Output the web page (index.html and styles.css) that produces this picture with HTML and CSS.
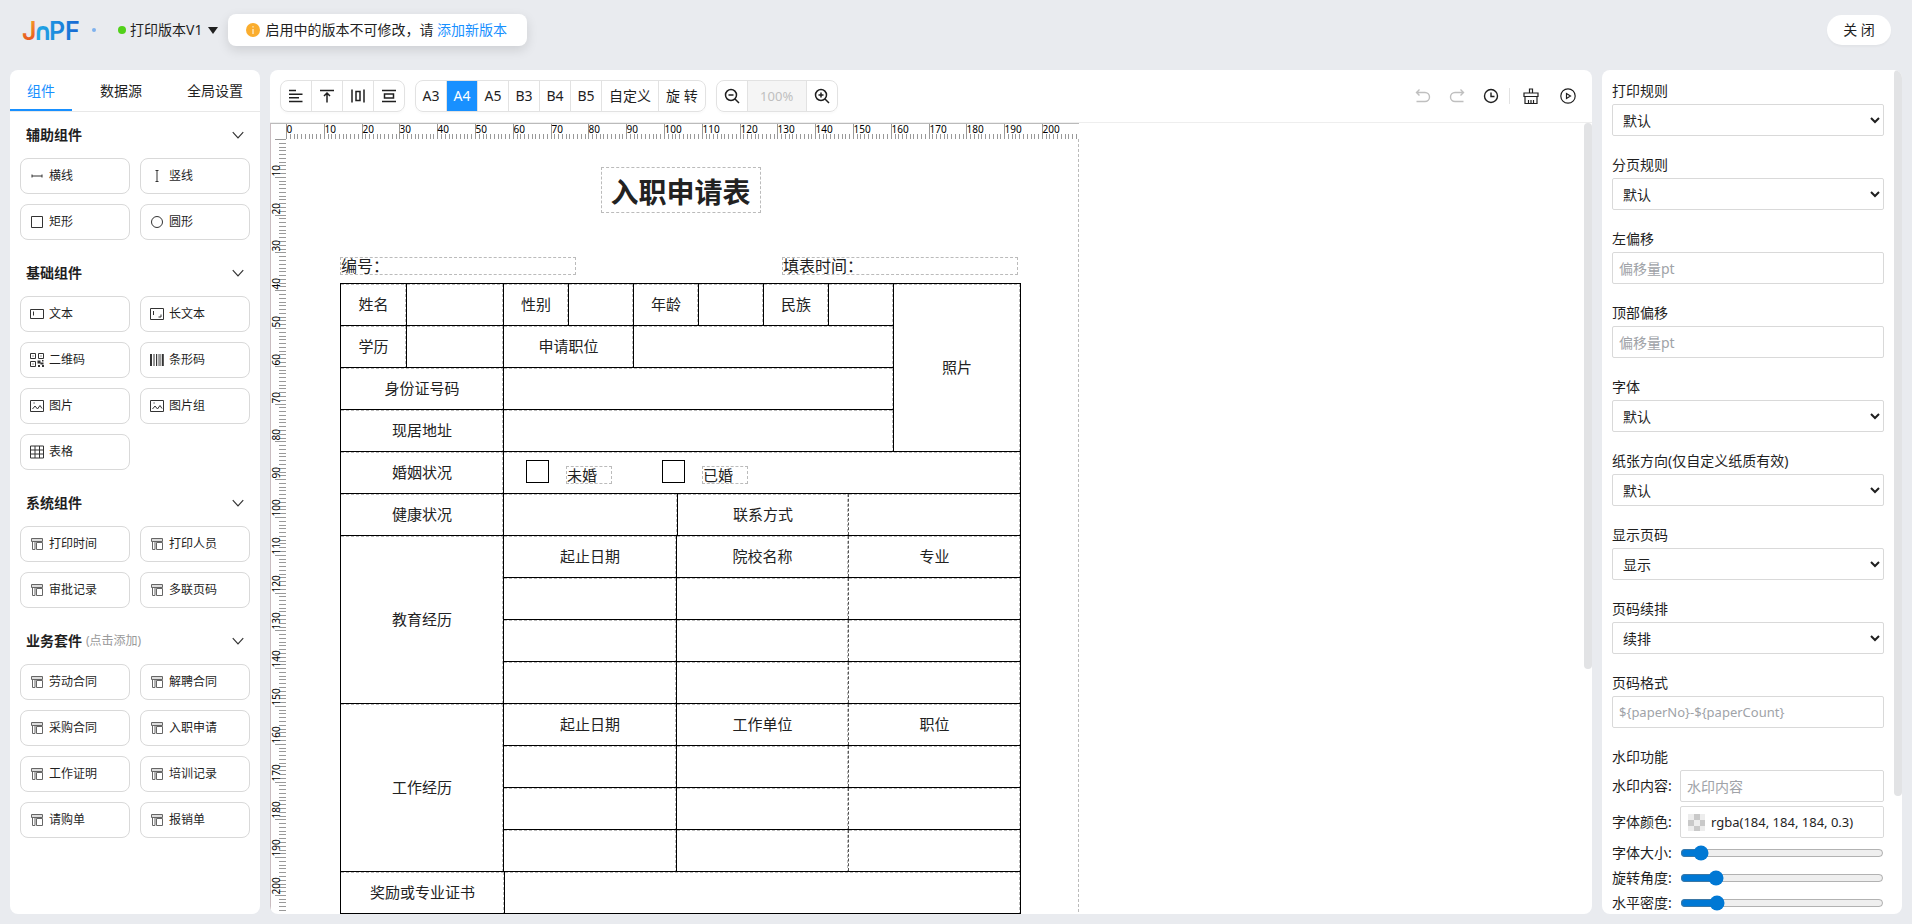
FILE: index.html
```
<!DOCTYPE html>
<html lang="zh-CN">
  <head>
    <meta charset="UTF-8" />
    <meta name="viewport" content="width=device-width, initial-scale=1.0" />
    <title>打印模板设计</title>
    <link rel="stylesheet" href="styles.css">
  </head>
  <body>
    <svg class="sprite" aria-hidden="true">
      <symbol id="i-hline" viewBox="0 0 14 14"><path d="M2 7h10M2 5.500v3M12 5.500v3" /></symbol>
      <symbol id="i-vline" viewBox="0 0 14 14"><path d="M7 1.500v11M5.500 1.500h3M5.500 12.500h3" /></symbol>
      <symbol id="i-rect" viewBox="0 0 14 14"><path d="M1.500 1.500h11v11h-11z" /></symbol>
      <symbol id="i-circle" viewBox="0 0 14 14"><circle cx="7" cy="7" r="5.500" /></symbol>
      <symbol id="i-text" viewBox="0 0 14 14"><path d="M.5 2.500h13v9H.5zM3.500 4.500v4" /></symbol>
      <symbol id="i-longtext" viewBox="0 0 14 14"><path d="M.5 1.500h13v11H.5zM3.500 4v4M8.500 10h2.500V7.500" /></symbol>
      <symbol id="i-qr" viewBox="0 0 14 14"><path d="M.5 .5h5v5h-5zM8.500 .5h5v5h-5zM.5 8.500h5v5h-5zM2.500 3h1M10.500 3h1M2.500 11h1" /><path d="M7.500 7.500h3v3h-3zM10.500 9.500h3v2h-3zM8 12h2v2H8zM12 12h2v2h-2zM12 7h1.500v1.500H12z" fill="currentColor" stroke="none" /></symbol>
      <symbol id="i-bar" viewBox="0 0 14 14"><path d="M1 1v12M12.800 1v12" stroke-width="2" /><path d="M4 1v12M6.500 1v12M10 1v12" /><path d="M8.200 1v12" stroke-width=".6" /></symbol>
      <symbol id="i-img" viewBox="0 0 14 14"><path d="M.5 1.500h13v11H.5zM2.500 10l2.500-3 2.500 3 2.500-3.500 2 3M3.500 4h1.200" /></symbol>
      <symbol id="i-table" viewBox="0 0 14 14"><path d="M.5 1h13v12H.5zM.5 5h13M.5 9h13M5 1v12M9.500 1v12" /></symbol>
      <symbol id="i-tpl" viewBox="0 0 14 14"><path d="M1.500 1.500h11v3h-11z" fill="#ddd" stroke="#666" /><path d="M2.500 4.500v8h2.500v-8M6.500 12.500v-7h6v7z" stroke="#666" /></symbol>
      <symbol id="i-chevron" viewBox="0 0 12 12"><path d="M1.500 3.500L6 8.500l4.500-5" /></symbol>
    </svg>

    <header class="header">
      <svg class="header__logo" width="58" height="32" viewBox="0 0 58 32" role="img" aria-label="JNPF">
        <defs>
          <linearGradient id="warm" x1="0" y1="0" x2="0" y2="1"><stop offset="0" stop-color="#f8a12a" /><stop offset="1" stop-color="#e2491f" /></linearGradient>
          <linearGradient id="cool" gradientUnits="userSpaceOnUse" x1="12" y1="0" x2="57" y2="0"><stop offset="0" stop-color="#22aee8" /><stop offset="1" stop-color="#1767d2" /></linearGradient>
        </defs>
        <text x="0" y="26" fill="url(#warm)">J</text>
        <text class="header__arch" x="11" y="26" fill="url(#cool)">∩</text>
        <text x="27" y="26" fill="url(#cool)">P</text>
        <text x="43" y="26" fill="url(#cool)">F</text>
      </svg>
      <i class="header__dot"></i>
      <button class="version"><i class="version__state"></i>打印版本V1<i class="version__caret"></i></button>
      <div class="notice">
        <svg width="14" height="14" viewBox="0 0 14 14"><circle cx="7" cy="7" r="7" fill="#faad2e" stroke="none" /><path d="M7 3.200v1.300M7 6v5" stroke="#fff" /></svg>
        <span>启用中的版本不可修改，请 <a href="#">添加新版本</a></span>
      </div>
      <button class="header__close">关 闭</button>
    </header>

    <main class="main">
      <aside class="panel sidebar">
        <nav class="tabs">
          <button class="tab tab--active">组件</button>
          <button class="tab">数据源</button>
          <button class="tab">全局设置</button>
        </nav>
        <section class="group">
          <h2 class="group__title">辅助组件<svg class="icon"><use href="#i-chevron" /></svg></h2>
          <div class="group__items">
            <button class="item"><svg class="icon"><use href="#i-hline" /></svg>横线</button>
            <button class="item"><svg class="icon"><use href="#i-vline" /></svg>竖线</button>
            <button class="item"><svg class="icon"><use href="#i-rect" /></svg>矩形</button>
            <button class="item"><svg class="icon"><use href="#i-circle" /></svg>圆形</button>
          </div>
        </section>
        <section class="group">
          <h2 class="group__title">基础组件<svg class="icon"><use href="#i-chevron" /></svg></h2>
          <div class="group__items">
            <button class="item"><svg class="icon"><use href="#i-text" /></svg>文本</button>
            <button class="item"><svg class="icon"><use href="#i-longtext" /></svg>长文本</button>
            <button class="item"><svg class="icon"><use href="#i-qr" /></svg>二维码</button>
            <button class="item"><svg class="icon"><use href="#i-bar" /></svg>条形码</button>
            <button class="item"><svg class="icon"><use href="#i-img" /></svg>图片</button>
            <button class="item"><svg class="icon"><use href="#i-img" /></svg>图片组</button>
            <button class="item"><svg class="icon"><use href="#i-table" /></svg>表格</button>
          </div>
        </section>
        <section class="group">
          <h2 class="group__title">系统组件<svg class="icon"><use href="#i-chevron" /></svg></h2>
          <div class="group__items">
            <button class="item"><svg class="icon"><use href="#i-tpl" /></svg>打印时间</button>
            <button class="item"><svg class="icon"><use href="#i-tpl" /></svg>打印人员</button>
            <button class="item"><svg class="icon"><use href="#i-tpl" /></svg>审批记录</button>
            <button class="item"><svg class="icon"><use href="#i-tpl" /></svg>多联页码</button>
          </div>
        </section>
        <section class="group">
          <h2 class="group__title">业务套件<small>(点击添加)</small><svg class="icon"><use href="#i-chevron" /></svg></h2>
          <div class="group__items">
            <button class="item"><svg class="icon"><use href="#i-tpl" /></svg>劳动合同</button>
            <button class="item"><svg class="icon"><use href="#i-tpl" /></svg>解聘合同</button>
            <button class="item"><svg class="icon"><use href="#i-tpl" /></svg>采购合同</button>
            <button class="item"><svg class="icon"><use href="#i-tpl" /></svg>入职申请</button>
            <button class="item"><svg class="icon"><use href="#i-tpl" /></svg>工作证明</button>
            <button class="item"><svg class="icon"><use href="#i-tpl" /></svg>培训记录</button>
            <button class="item"><svg class="icon"><use href="#i-tpl" /></svg>请购单</button>
            <button class="item"><svg class="icon"><use href="#i-tpl" /></svg>报销单</button>
          </div>
        </section>
      </aside>

      <section class="panel designer">
        <div class="toolbar">
          <div class="btn-group">
            <button aria-label="左对齐"><svg width="16" height="16" viewBox="0 0 16 16"><path d="M1 2.500h7M1 6.200h13.500M1 9.800h10M1 13.500h13.500" /></svg></button>
            <button aria-label="顶对齐"><svg width="16" height="16" viewBox="0 0 16 16"><path d="M1 2.500h14M8 14.500V5M5 8l3-3 3 3" /></svg></button>
            <button aria-label="水平分布"><svg width="16" height="16" viewBox="0 0 16 16"><path d="M2 1.500v13M14 1.500v13M6 3.500h4v9H6z" /></svg></button>
            <button aria-label="垂直分布"><svg width="16" height="16" viewBox="0 0 16 16"><path d="M1 2.500h14M1 13.500h14M3.500 6h9v4h-9z" /></svg></button>
          </div>
          <div class="btn-group">
            <button>A3</button>
            <button class="active">A4</button>
            <button>A5</button>
            <button>B3</button>
            <button>B4</button>
            <button>B5</button>
            <button>自定义</button>
            <button>旋 转</button>
          </div>
          <div class="btn-group">
            <button aria-label="缩小"><svg width="16" height="16" viewBox="0 0 16 16"><circle cx="7" cy="7" r="5.500" /><path d="M11 11l4 4M4.500 7h5" /></svg></button>
            <input class="zoom" type="text" value="100%" aria-label="缩放" disabled />
            <button aria-label="放大"><svg width="16" height="16" viewBox="0 0 16 16"><circle cx="7" cy="7" r="5.500" /><path d="M11 11l4 4M4.500 7h5M7 4.500v5" /></svg></button>
          </div>
          <div class="actions">
            <button aria-label="撤销" disabled><svg width="16" height="16" viewBox="0 0 16 16"><path d="M4.500 1.500L1.500 4.500l3 3M1.500 4.500H10a4.500 4.500 0 0 1 0 9H1.500" /></svg></button>
            <button aria-label="重做" disabled><svg width="16" height="16" viewBox="0 0 16 16"><path d="M11.500 1.500l3 3-3 3M14.500 4.500H6a4.500 4.500 0 0 0 0 9h8.500" /></svg></button>
            <button aria-label="历史"><svg width="16" height="16" viewBox="0 0 16 16"><circle cx="8" cy="8" r="6.500" /><path d="M8 4.500v4h3.500" /></svg></button>
            <i class="actions__divider"></i>
            <button aria-label="清空"><svg width="16" height="16" viewBox="0 0 16 16"><path d="M6.500 5V1h3v4M1 5h14v3.500H1zM2 8.500v7h12v-7M5.500 15v-3M8 15v-3M10.500 15v-3" stroke-width="1.200" /></svg></button>
            <button aria-label="预览"><svg width="16" height="16" viewBox="0 0 16 16"><circle cx="8" cy="8" r="7.200" stroke-width="1.200" /><path d="M6.500 5.500v5l4-2.500z" stroke-width="1.200" /></svg></button>
          </div>
        </div>

        <div class="stage">
          <div class="canvas" id="canvas">
            <i class="canvas__corner"></i>
            <svg class="ruler ruler--x" id="rulerX"></svg>
            <svg class="ruler ruler--y" id="rulerY"></svg>
            <article class="paper">
              <h1 class="paper__title">入职申请表</h1>
              <div class="paper__meta">
                <span>编号：</span>
                <span>填表时间：</span>
              </div>

              <table class="sheet">
                <colgroup>
                  <col class="w66"><col class="w97"><col class="w65"><col class="w65"><col class="w65"><col class="w65"><col class="w65"><col class="w65"><col>
                </colgroup>
                <tr><td>姓名</td><td></td><td>性别</td><td></td><td>年龄</td><td></td><td>民族</td><td></td><td rowspan="4">照片</td></tr>
                <tr><td>学历</td><td></td><td colspan="2">申请职位</td><td colspan="4"></td></tr>
                <tr><td colspan="2">身份证号码</td><td colspan="6"></td></tr>
                <tr><td colspan="2">现居地址</td><td colspan="6"></td></tr>
              </table>

              <table class="sheet">
                <colgroup><col class="w163"><col></colgroup>
                <tr>
                  <td>婚姻状况</td>
                  <td>
                    <div class="choices">
                      <label><input type="checkbox" /><span>未婚</span></label>
                      <label><input type="checkbox" /><span>已婚</span></label>
                    </div>
                  </td>
                </tr>
              </table>

              <table class="sheet">
                <colgroup><col class="w163"><col class="w174"><col class="w171"><col></colgroup>
                <tr><td>健康状况</td><td></td><td class="open">联系方式</td><td></td></tr>
              </table>

              <table class="sheet">
                <colgroup><col class="w163"><col class="w173"><col class="w172"><col></colgroup>
                <tr><td rowspan="4">教育经历</td><td>起止日期</td><td class="open">院校名称</td><td>专业</td></tr>
                <tr><td></td><td class="open"></td><td></td></tr>
                <tr><td></td><td class="open"></td><td></td></tr>
                <tr><td></td><td class="open"></td><td></td></tr>
                <tr><td rowspan="4">工作经历</td><td>起止日期</td><td class="open">工作单位</td><td>职位</td></tr>
                <tr><td></td><td class="open"></td><td></td></tr>
                <tr><td></td><td class="open"></td><td></td></tr>
                <tr><td></td><td class="open"></td><td></td></tr>
              </table>

              <table class="sheet">
                <colgroup><col class="w164"><col></colgroup>
                <tr><td>奖励或专业证书</td><td></td></tr>
              </table>
            </article>
          </div>
          <div class="scrollbar scrollbar--stage"></div>
        </div>
      </section>

      <aside class="panel props">
        <form class="form">
          <div class="field">
            <label for="rule">打印规则</label>
            <select id="rule"><option>默认</option></select>
          </div>
          <div class="field">
            <label for="paging">分页规则</label>
            <select id="paging"><option>默认</option></select>
          </div>
          <div class="field">
            <label for="left">左偏移</label>
            <input id="left" type="text" placeholder="偏移量pt" />
          </div>
          <div class="field">
            <label for="top">顶部偏移</label>
            <input id="top" type="text" placeholder="偏移量pt" />
          </div>
          <div class="field">
            <label for="font">字体</label>
            <select id="font"><option>默认</option></select>
          </div>
          <div class="field">
            <label for="direction">纸张方向(仅自定义纸质有效)</label>
            <select id="direction"><option>默认</option></select>
          </div>
          <div class="field">
            <label for="pageno">显示页码</label>
            <select id="pageno"><option>显示</option></select>
          </div>
          <div class="field">
            <label for="continue">页码续排</label>
            <select id="continue"><option>续排</option></select>
          </div>
          <div class="field">
            <label for="format">页码格式</label>
            <input id="format" class="code" type="text" placeholder="${paperNo}-${paperCount}" />
          </div>
          <fieldset class="watermark">
            <legend>水印功能</legend>
            <div class="row">
              <label for="wm-text">水印内容:</label>
              <div class="row__control">
                <input id="wm-text" type="text" placeholder="水印内容" />
              </div>
            </div>
            <div class="row">
              <label for="wm-color">字体颜色:</label>
              <div class="row__control color">
                <i class="color__swatch"></i>
                <input id="wm-color" class="code" type="text" value="rgba(184, 184, 184, 0.3)" />
              </div>
            </div>
            <div class="row row--range">
              <label for="wm-size">字体大小:</label>
              <input id="wm-size" class="row__control" type="range" min="0" max="200" value="14" />
            </div>
            <div class="row row--range">
              <label for="wm-angle">旋转角度:</label>
              <input id="wm-angle" class="row__control" type="range" min="0" max="200" value="30" />
            </div>
            <div class="row row--range">
              <label for="wm-density">水平密度:</label>
              <input id="wm-density" class="row__control" type="range" min="0" max="200" value="31" />
            </div>
          </fieldset>
        </form>
        <div class="scrollbar scrollbar--props"></div>
      </aside>
    </main>

    <script>
      const MM = 96 / 25.4;
      const canvas = document.getElementById("canvas");

      // One tick per millimetre, a long labelled one every 10mm
      function drawRuler(svg, length, vertical) {
        let html = "";
        for (let mm = 0; mm < length; mm++) {
          const pos = Math.round(mm * MM) + 0.5;
          const major = mm % 10 === 0;
          if (vertical) {
            html += `<path d="M${major ? 4 : 8} ${pos}H16" />`;
            if (major && mm > 0) {
              html += `<text transform="translate(9 ${pos - 1}) rotate(-90)">${mm}</text>`;
            }
          } else {
            html += `<path d="M${pos} ${major ? 0 : 10}V16" />`;
            if (major) {
              html += `<text x="${pos}" y="9">${mm}</text>`;
            }
          }
        }
        svg.innerHTML = html;
      }

      const visible = (canvas.clientHeight - 16) / MM;
      drawRuler(document.getElementById("rulerX"), 210, false);
      drawRuler(document.getElementById("rulerY"), Math.min(297, visible), true);
    </script>
  </body>
</html>
```
FILE: styles.css
```
* {
  margin: 0;
  padding: 0;
  box-sizing: border-box;
}

body {
  display: flex;
  flex-direction: column;
  height: 100vh;
  overflow: hidden;
  background-color: #e9ebef;
  color: #1f1f1f;
  font-family: "Noto Sans", "Noto Sans CJK SC", sans-serif;
  font-size: 14px;
  line-height: 22px;
}

button,
input,
select {
  font: inherit;
  color: inherit;
}

button {
  border: none;
  background: none;
  cursor: pointer;
}

a {
  color: #1890ff;
  text-decoration: none;
}

svg {
  fill: none;
  stroke: currentColor;
  flex: none;
}

.sprite {
  position: absolute;
  width: 0;
  height: 0;
}

.icon {
  width: 14px;
  height: 14px;
  color: #333;
}

/* header */
.header {
  display: flex;
  align-items: center;
  flex: none;
  height: 60px;
  margin-bottom: 10px;
  padding: 0 21px 0 22px;
}

.header__logo {
  overflow: visible;
  stroke: none;
  font-family: Inter, sans-serif;
  font-size: 25px;
  font-weight: 600;
}

.header__arch {
  font-family: "DejaVu Sans", sans-serif;
  font-size: 24px;
  font-weight: 700;
}

.header__dot {
  width: 4px;
  height: 4px;
  margin: 0 22px 0 12px;
  border-radius: 50%;
  background-color: #7fb2ee;
}

.version {
  display: flex;
  align-items: center;
  gap: 4px;
}

.version__state {
  width: 8px;
  height: 8px;
  border-radius: 50%;
  background-color: #52d11a;
}

.version__caret {
  margin-left: 2px;
  border: 5px solid transparent;
  border-top: 7px solid #1f1f1f;
  border-bottom: none;
}

.notice {
  display: flex;
  align-items: center;
  gap: 5px;
  height: 32px;
  margin-left: 10px;
  padding: 0 20px 0 18px;
  border-radius: 8px;
  background-color: #fff;
  box-shadow: 0 4px 12px rgba(0, 0, 0, 0.12);
}

.header__close {
  width: 64px;
  height: 30px;
  margin-left: auto;
  border-radius: 15px;
  background-color: #fff;
  box-shadow: 0 2px 2px rgba(0, 0, 0, 0.03);
}

/* layout */
.main {
  display: grid;
  grid-template-columns: 250px minmax(0, 1fr) 300px;
  grid-template-rows: minmax(0, 1fr);
  gap: 10px;
  flex: 1;
  min-height: 0;
  padding: 0 10px 10px;
}

.panel {
  overflow: hidden;
  border-radius: 8px;
  background-color: #fff;
}

.scrollbar {
  width: 8px;
  border-radius: 4px;
  background-color: #e2e3e5;
}

/* left sidebar */
.tabs {
  display: flex;
  justify-content: space-between;
  border-bottom: 1px solid #e8e8e8;
}

.tab {
  height: 41px;
  padding: 0 17px;
}

.tab--active {
  color: #1890ff;
  box-shadow: inset 0 -2px #1890ff;
}

.group {
  padding: 22px 10px 0;
}

.tabs + .group {
  padding-top: 12px;
}

.group__title {
  display: flex;
  align-items: center;
  gap: 4px;
  margin-bottom: 12px;
  padding: 0 5px 0 6px;
  font-size: 14px;
  font-weight: 600;
}

.group__title small {
  color: #999;
  font-size: 12px;
  font-weight: 400;
}

.group__title .icon {
  margin-left: auto;
}

.group__items {
  display: grid;
  grid-template-columns: 1fr 1fr;
  gap: 10px;
}

.item {
  display: flex;
  align-items: center;
  gap: 5px;
  height: 36px;
  padding: 0 9px;
  border: 1px solid #d9d9d9;
  border-radius: 8px;
  font-size: 12px;
}

/* designer */
.designer {
  display: flex;
  flex-direction: column;
}

.toolbar {
  display: flex;
  gap: 10px;
  padding: 10px 8px 10px 10px;
  border-bottom: 1px solid #eee;
}

.btn-group {
  display: flex;
  overflow: hidden;
  border: 1px solid #e2e2e2;
  border-radius: 8px;
  box-shadow: 0 2px 2px rgba(0, 0, 0, 0.02);
}

.btn-group button {
  display: flex;
  align-items: center;
  justify-content: center;
  min-width: 31px;
  height: 30px;
  padding: 0 7px;
}

.btn-group button:first-child {
  min-width: 30px;
}

.btn-group button:not(:first-child) {
  border-left: 1px solid #e2e2e2;
}

.btn-group button:nth-child(-n + 6) {
  padding: 0 4px;
}

.btn-group svg {
  stroke-width: 1.5;
}

.btn-group .active {
  background-color: #1890ff;
  color: #fff;
}

.zoom {
  width: 59px;
  border: none;
  border-left: 1px solid #e2e2e2;
  background-color: #f5f5f5;
  color: #bfbfbf;
  font-size: 13px;
  text-align: center;
}

.actions {
  display: flex;
  align-items: center;
  gap: 2px;
  margin-left: auto;
}

.actions button {
  display: flex;
  align-items: center;
  justify-content: center;
  width: 32px;
  height: 32px;
}

.actions svg {
  stroke-width: 1.4;
}

.actions button:disabled {
  color: #bfbfbf;
}

.actions__divider {
  width: 1px;
  height: 16px;
  background-color: #e2e2e2;
}

.actions__divider ~ button {
  margin-left: 3px;
}

.stage {
  display: flex;
  justify-content: space-between;
  flex: 1;
  min-height: 0;
}

.canvas {
  display: grid;
  grid-template-columns: 16px 793px;
  grid-template-rows: 16px 297mm;
  overflow: hidden;
}

.canvas__corner {
  border-top: 1px solid #bbb;
  border-left: 1px solid #c9bcc0;
}

.ruler {
  width: 100%;
  height: 100%;
  stroke: #999;
  shape-rendering: crispEdges;
}

.ruler--x {
  border-top: 1px solid #bbb;
}

.ruler--y {
  border-left: 1px solid #c9bcc0;
}

.ruler text {
  fill: #000;
  stroke: none;
  font-size: 10px;
}

.scrollbar--stage {
  height: 69%;
}

/* paper */
.paper {
  padding: 28px 57px 0 54px;
  border-right: 1px dashed #bbb;
  color: #222;
}

.paper__title {
  width: 160px;
  height: 46px;
  margin: 0 auto 44px;
  border: 1px dashed #bbb;
  font-size: 28px;
  font-weight: 700;
  line-height: 48px;
  text-align: center;
}

.paper__meta {
  display: flex;
  justify-content: space-between;
  margin-bottom: 8px;
  padding-right: 3px;
  font-size: 16px;
  line-height: 16px;
}

.paper__meta span {
  width: 236px;
  border: 1px dashed #bbb;
}

.sheet {
  width: 100%;
  border-collapse: collapse;
  table-layout: fixed;
  font-size: 15px;
  text-align: center;
}

.sheet + .sheet {
  margin-top: -1px;
}

.sheet td {
  height: 42px;
  padding-bottom: 2px;
  border: 1px solid #000;
  background-image:
    repeating-linear-gradient(to right, #bbb 0 3px, transparent 3px 5px),
    repeating-linear-gradient(to bottom, #bbb 0 3px, transparent 3px 5px);
  background-position: left top, right top;
  background-repeat: no-repeat;
  background-size: 100% 1px, 1px 100%;
  background-origin: padding-box;
}

.sheet .open {
  border-right: 1px dashed #555;
}

.sheet .open + td {
  border-left: 1px dashed #555;
}

.w65 {
  width: 65px;
}

.w66 {
  width: 66px;
}

.w97 {
  width: 97px;
}

.w163 {
  width: 163px;
}

.w164 {
  width: 164px;
}

.w171 {
  width: 171px;
}

.w172 {
  width: 172px;
}

.w173 {
  width: 173px;
}

.w174 {
  width: 174px;
}

.choices {
  display: flex;
  gap: 50px;
  padding-left: 22px;
}

.choices label {
  display: flex;
  align-items: center;
  gap: 17px;
}

.choices input {
  width: 23px;
  height: 23px;
  border: 1px solid #000;
  appearance: none;
}

.choices span {
  width: 46px;
  margin-top: 6px;
  border: 1px dashed #bbb;
  line-height: 16px;
  text-align: left;
}

/* right properties */
.props {
  display: flex;
}

.form {
  flex: 1;
  min-width: 0;
  padding: 10px;
}

.field {
  display: flex;
  flex-direction: column;
  gap: 2px;
  margin-bottom: 18px;
}

.form input[type="text"],
.form select {
  width: 100%;
  height: 32px;
  padding: 0 6px;
  border: 1px solid #d9d9d9;
  border-radius: 2px;
  background-color: #fff;
}

.form .code {
  font-size: 13px;
}

.form ::placeholder {
  color: #a0a3a8;
}

.watermark {
  border: none;
}

.watermark legend {
  margin-bottom: 2px;
}

.row {
  display: flex;
  align-items: center;
  justify-content: space-between;
  margin-bottom: 4px;
}

.row__control {
  flex: none;
  width: 75%;
}

.row--range {
  margin-bottom: 3px;
}

.row input[type="range"] {
  height: 16px;
  accent-color: #0078d4;
}

.color {
  display: flex;
  align-items: center;
  padding-left: 7px;
  border: 1px solid #d9d9d9;
  border-radius: 2px;
}

.form .color input {
  flex: 1;
  min-width: 0;
  height: 30px;
  border: none;
}

.color__swatch {
  width: 17px;
  height: 17px;
  background: repeating-conic-gradient(#c9c9c9 0 25%, #ededed 0 50%) 0 0 / 12px 12px;
}

.scrollbar--props {
  height: 86%;
}
```
